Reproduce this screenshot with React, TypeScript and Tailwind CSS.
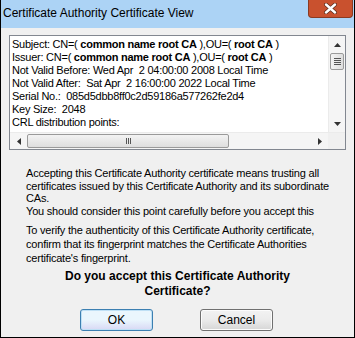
import React from 'react';

const font = { fontFamily: '"Liberation Sans", Arial, sans-serif' };

function ArrowUp() {
  return (
    <svg width="7" height="4" viewBox="0 0 7 4">
      <path d="M3.5 0 L7 4 L0 4 Z" fill="#333" />
    </svg>
  );
}

function ArrowDown() {
  return (
    <svg width="7" height="4" viewBox="0 0 7 4">
      <path d="M0 0 L7 0 L3.5 4 Z" fill="#333" />
    </svg>
  );
}

function ArrowLeft() {
  return (
    <svg width="4" height="7" viewBox="0 0 4 7">
      <path d="M4 0 L4 7 L0 3.5 Z" fill="#333" />
    </svg>
  );
}

function ArrowRight() {
  return (
    <svg width="4" height="7" viewBox="0 0 4 7">
      <path d="M0 0 L4 3.5 L0 7 Z" fill="#333" />
    </svg>
  );
}

export default function App() {
  const lines: React.ReactNode[] = [
    <>
      Subject: CN=( <b>common name root CA</b> ),OU=( <b>root CA</b> )
    </>,
    <>
      Issuer: CN=( <b>common name root CA</b> ),OU=( <b>root CA</b> )
    </>,
    <>Not Valid Before: Wed Apr &nbsp;2 04:00:00 2008 Local Time</>,
    <>Not Valid After: &nbsp;Sat Apr &nbsp;2 16:00:00 2022 Local Time</>,
    <>Serial No.: &nbsp;085d5dbb8ff0c2d59186a577262fe2d4</>,
    <>Key Size: &nbsp;2048</>,
    <>CRL distribution points:</>,
  ];

  return (
    <div className="w-[355px] h-[338px] flex flex-col bg-[#f0f0f0] border-l border-r border-b border-black relative" style={font}>
      {/* title bar */}
      <div className="h-[28px] bg-[#acd3f5] pl-[2px] pt-[6px] text-[12px] leading-[14px] text-black">
        Certificate Authority Certificate View
      </div>
      <div className="absolute top-0 right-[1px] w-[45px] h-[18px] bg-[#c9512e] border border-t-0 border-[#8a3a22] rounded-b-[4px] flex items-center justify-center">
        <svg width="13" height="11" viewBox="0 0 13 11">
          <path d="M2 1.5 L11 9.5 M11 1.5 L2 9.5" stroke="#5a2a1a" strokeWidth="3.8" strokeLinecap="round" />
          <path d="M2 1.5 L11 9.5 M11 1.5 L2 9.5" stroke="#ffffff" strokeWidth="2.4" strokeLinecap="round" />
        </svg>
      </div>

      {/* details box */}
      <div className="mx-[8px] mt-[7px] h-[115px] border border-[#828790] bg-white flex flex-col">
        <div className="flex flex-1 min-h-0">
          <div className="flex-1 overflow-hidden pl-[2px] pt-[2px] text-[11px] tracking-[-0.25px] leading-[13px] text-black whitespace-nowrap">
            {lines.map((l, i) => (
              <div key={i}>{l}</div>
            ))}
          </div>
          <div className="w-[17px] flex flex-col bg-[#f5f5f5] border-l border-[#ebebeb]">
            <div className="h-[17px] flex items-center justify-center">
              <ArrowUp />
            </div>
            <div className="mx-[1px] h-[17px] border border-[#9a9a9a] rounded-[2px] bg-gradient-to-r from-[#f3f3f3] to-[#dedede] flex flex-col items-center justify-center gap-[1px]">
              <div className="w-[7px] h-[1px] bg-[#555]" />
              <div className="w-[7px] h-[1px] bg-[#555]" />
              <div className="w-[7px] h-[1px] bg-[#555]" />
              <div className="w-[7px] h-[1px] bg-[#555]" />
            </div>
            <div className="flex-1" />
            <div className="h-[17px] flex items-center justify-center">
              <ArrowDown />
            </div>
          </div>
        </div>
        <div className="h-[17px] flex bg-[#f5f5f5] border-t border-[#ebebeb]">
          <div className="w-[17px] flex items-center justify-center">
            <ArrowLeft />
          </div>
          <div className="w-[202px] my-[1px] border border-[#9a9a9a] rounded-[2px] bg-gradient-to-b from-[#f3f3f3] to-[#dedede] flex items-center justify-center gap-[1px]">
            <div className="w-[1px] h-[6px] bg-[#555]" />
            <div className="w-[1px] h-[6px] bg-[#555]" />
            <div className="w-[1px] h-[6px] bg-[#555]" />
          </div>
          <div className="flex-1" />
          <div className="w-[17px] flex items-center justify-center">
            <ArrowRight />
          </div>
          <div className="w-[17px] bg-[#f0f0f0]" />
        </div>
      </div>

      {/* message */}
      <div className="pl-[25px] pr-[20px] mt-[17px] text-[11px] tracking-[-0.2px] text-black">
        <p className="leading-[12.5px]">
          Accepting this Certificate Authority certificate means trusting all certificates issued by this Certificate Authority and its subordinate CAs.
        </p>
        <p className="leading-[12.5px]">You should consider this point carefully before you accept this</p>
        <p className="mt-[6px] leading-[14px]">
          To verify the authenticity of this Certificate Authority certificate, confirm that its fingerprint matches the Certificate Authorities certificate's fingerprint.
        </p>
      </div>
      <div className="mt-[4px] text-center font-bold text-[12px] leading-[15px] text-black px-[60px]">
        Do you accept this Certificate Authority Certificate?
      </div>

      {/* buttons */}
      <div className="flex pl-[79px] gap-[47px] mt-[10px]">
        <button className="w-[73px] h-[22px] rounded-[3px] border border-[#3c7fb1] bg-gradient-to-b from-[#eaf6fd] via-[#eaf6fd] to-[#d8d8f4] text-[12px] text-black shadow-[inset_0_0_0_1px_#bfe0f5]">
          OK
        </button>
        <button className="w-[73px] h-[22px] rounded-[3px] border border-[#707070] bg-gradient-to-b from-[#f2f2f2] via-[#ebebeb] to-[#d6d6d6] text-[12px] text-black shadow-[inset_0_0_0_1px_#fcfcfc]">
          Cancel
        </button>
      </div>
    </div>
  );
}
